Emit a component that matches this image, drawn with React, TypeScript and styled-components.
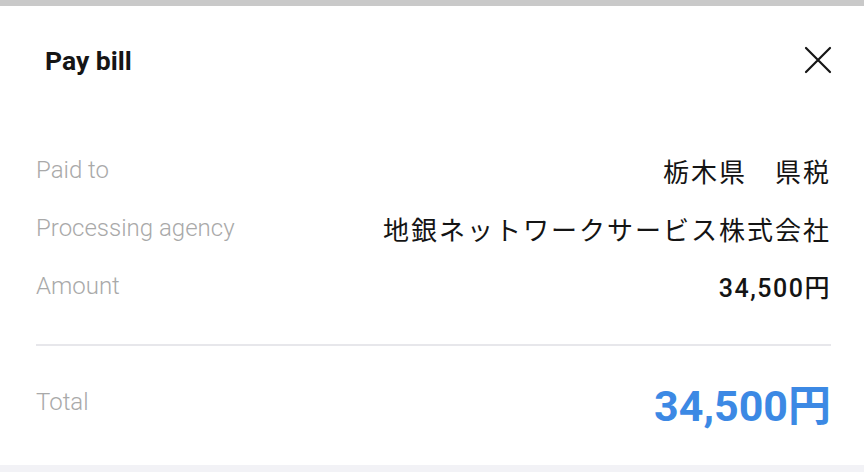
import React from 'react';
import styled, { createGlobalStyle } from 'styled-components';

const GlobalStyle = createGlobalStyle`
    html, body {
        margin: 0;
        padding: 0;
        background: #ffffff;
    }
    body {
        font-family: Roboto, "Noto Sans CJK JP", sans-serif;
        -webkit-font-smoothing: antialiased;
    }
`;

const Page = styled.div`
    display: flex;
    flex-direction: column;
    width: 864px;
    height: 472px;
    overflow: hidden;
`;

const TopBar = styled.div`
    height: 6px;
    background: #c9c9c9;
    flex-shrink: 0;
`;

const Sheet = styled.div`
    display: flex;
    flex-direction: column;
    flex: 1;
    padding: 0 33px 0 36px;
    background: #ffffff;
`;

const Header = styled.div`
    display: flex;
    justify-content: space-between;
    align-items: center;
    height: 108px;
    margin-bottom: 27px;
`;

const Title = styled.h1`
    margin: 0;
    padding-left: 9px;
    font-family: Roboto, sans-serif;
    font-size: 26.5px;
    font-weight: 700;
    color: #151515;
`;

const CloseButton = styled.button`
    display: flex;
    align-items: center;
    justify-content: center;
    width: 28px;
    height: 28px;
    margin-right: -1px;
    padding: 0;
    border: none;
    background: none;
    cursor: pointer;
`;

const Row = styled.div<{ $height?: number }>`
    display: flex;
    justify-content: space-between;
    align-items: center;
    height: ${(p) => p.$height ?? 58}px;
`;

const Label = styled.span`
    font-family: Roboto, sans-serif;
    font-size: 24px;
    font-weight: 300;
    color: #a9a9a9;
`;

const Value = styled.span<{ $weight?: number; $size?: number; $spacing?: number }>`
    font-family: Roboto, "Noto Sans CJK JP", sans-serif;
    font-size: ${(p) => p.$size ?? 26}px;
    font-weight: ${(p) => p.$weight ?? 400};
    letter-spacing: ${(p) => p.$spacing ?? 2}px;
    color: #141414;
`;

const Divider = styled.div`
    height: 2px;
    background: #e7e7eb;
    margin-top: 29px;
`;

const TotalValue = styled.span`
    font-family: Roboto, "Noto Sans CJK JP", sans-serif;
    font-size: 43px;
    font-weight: 700;
    color: #3c89e4;
`;

const BottomStrip = styled.div`
    height: 7px;
    background: #f2f2f6;
    flex-shrink: 0;
`;

const CloseIcon = () => (
    <svg width="28" height="28" viewBox="0 0 28 28" fill="none">
        <path d="M2 2L26 26M26 2L2 26" stroke="#151515" strokeWidth="2.2" strokeLinecap="round" />
    </svg>
);

const details = [
    { label: 'Paid to', value: '栃木県\u3000県税' },
    { label: 'Processing agency', value: '地銀ネットワークサービス株式会社' },
    { label: 'Amount', value: '34,500円', weight: 500, size: 25, spacing: 1.5 },
];

const App: React.FC = () => {
    return (
        <>
            <GlobalStyle />
            <Page>
                <TopBar />
                <Sheet>
                    <Header>
                        <Title>Pay bill</Title>
                        <CloseButton aria-label="Close">
                            <CloseIcon />
                        </CloseButton>
                    </Header>
                    {details.map((d) => (
                        <Row key={d.label}>
                            <Label>{d.label}</Label>
                            <Value $weight={d.weight} $size={d.size} $spacing={d.spacing}>
                                {d.value}
                            </Value>
                        </Row>
                    ))}
                    <Divider />
                    <Row $height={112}>
                        <Label>Total</Label>
                        <TotalValue>34,500円</TotalValue>
                    </Row>
                </Sheet>
                <BottomStrip />
            </Page>
        </>
    );
};

export default App;
